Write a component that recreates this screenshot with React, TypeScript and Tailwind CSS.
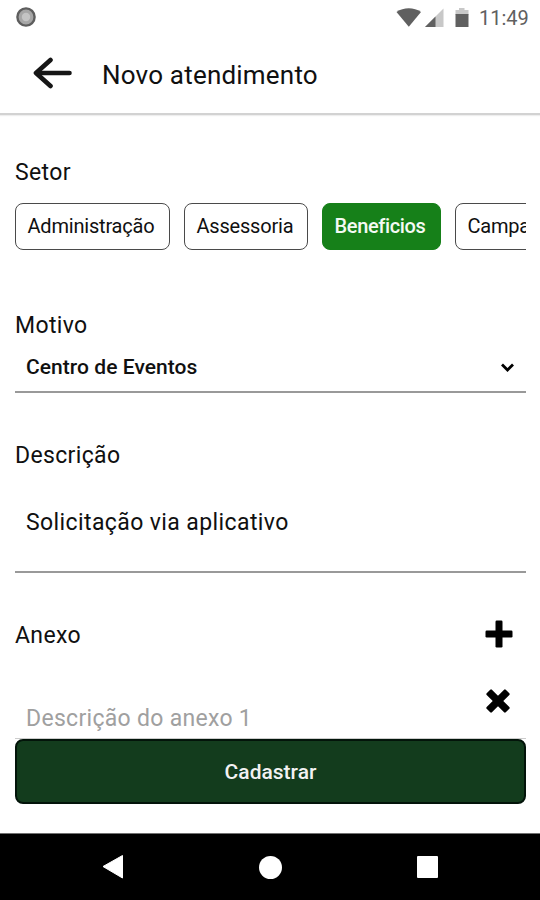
import React from 'react';

type Sector = {
  name: string;
  width: string;
  active?: boolean;
};

const sectors: Sector[] = [
  { name: 'Administração', width: 'w-[155px]' },
  { name: 'Assessoria', width: 'w-[124px]' },
  { name: 'Beneficios', width: 'w-[119px]', active: true },
  { name: 'Campanha', width: 'w-[124px]' },
];

// Android status bar
const StatusBar: React.FC = () => (
  <div className="flex h-9 shrink-0 items-center justify-between pl-4 pr-3">
    <svg width="20" height="20" viewBox="0 0 20 20" className="-mt-[2px]">
      <circle cx="10" cy="10" r="8.6" fill="#a6a6a6" stroke="#5e5e5e" strokeWidth="2.4" />
      <circle cx="10" cy="10" r="4.2" fill="#c4c4c4" />
    </svg>
    <div className="flex items-center">
      <svg width="76" height="20" viewBox="0 0 76 20">
        <path d="M0.5 4C7.5-1 18-1 25 4L12.8 18.8Z" fill="#606060" />
        <path d="M47.5 .5V19H29Z" fill="#c8c8c8" />
        <path d="M39.5 8.5V19H29Z" fill="#606060" />
        <path d="M63 0H68.5V2H72.5V7H59.5V2H63Z" fill="#c8c8c8" />
        <path d="M59.5 6H72.5V19H59.5Z" fill="#606060" />
      </svg>
      <span className="ml-[7px] w-[49px] text-[20px] leading-5 text-[#606060]">11:49</span>
    </div>
  </div>
);

const Header: React.FC = () => (
  <header className="flex h-[79px] shrink-0 items-center border-b-2 border-[#d2d2d2] pl-[33px] pb-[2px] shadow-[0_1px_1px_#eeeeee]">
    <svg width="40" height="32" viewBox="0 0 40 32" fill="none" stroke="#161616" className="-mt-px">
      <path d="M17.5 3L3 16L17.5 29" strokeWidth="4.6" strokeLinecap="round" strokeLinejoin="round" />
      <path d="M4 16H36.5" strokeWidth="4.6" strokeLinecap="round" />
    </svg>
    <h1 className="ml-[29px] mt-[2px] text-[26px] leading-8 tracking-[0.2px]">Novo atendimento</h1>
  </header>
);

const Label: React.FC<{ children: React.ReactNode }> = ({ children }) => (
  <h2 className="h-7 pt-px text-[23px] leading-7 tracking-[0.35px]">{children}</h2>
);

// Android navigation bar
const NavBar: React.FC = () => (
  <nav className="flex h-[67px] shrink-0 items-center justify-between border-t border-[#707070] bg-black pl-[101px] pr-[102px]">
    <svg width="22" height="26" viewBox="0 0 22 26" fill="#fff">
      <path d="M2 12.5L21.5 1.5V24Z" stroke="#fff" strokeLinejoin="round" />
    </svg>
    <div className="size-[23px] rounded-full bg-white" />
    <div className="h-[22px] w-[21px] rounded-[1px] bg-white" />
  </nav>
);

const App: React.FC = () => (
  <div className="flex h-[900px] w-[540px] flex-col overflow-hidden bg-white font-['Roboto',sans-serif] text-[#101010]">
    <StatusBar />
    <Header />

    <main className="flex min-h-0 flex-1 flex-col pl-[15px] pr-[14px] pt-[43px]">
      {/* Setor */}
      <Label>Setor</Label>
      <div className="mt-[17px] flex gap-[14px] overflow-hidden">
        {sectors.map((sector) => (
          <button
            key={sector.name}
            className={`h-[47px] shrink-0 rounded-lg border pb-[2px] pl-[11.5px] text-left text-[20px] leading-6 ${sector.width} ${
              sector.active
                ? 'border-[#168019] bg-[#168019] font-medium tracking-[-0.35px] text-[#f4faf4]'
                : 'border-[#4a4a4a] tracking-[-0.2px]'
            }`}
          >
            {sector.name}
          </button>
        ))}
      </div>

      {/* Motivo */}
      <div className="mt-[61px] border-b-2 border-[#999]">
        <Label>Motivo</Label>
        <div className="flex h-[52px] items-center justify-between pl-[11px] pr-3 pt-1">
          <span className="text-[21px] font-medium leading-7 tracking-[0.05px]">Centro de Eventos</span>
          <svg width="13" height="9" viewBox="0 0 13 9" fill="none" stroke="#000" strokeWidth="2.8">
            <path d="M1 1.5L6.5 7L12 1.5" />
          </svg>
        </div>
      </div>

      {/* Descrição */}
      <div className="mt-[48px] border-b-2 border-[#999]">
        <Label>Descrição</Label>
        <p className="h-[102px] pl-[11px] pt-[40px] text-[23px] font-[450] leading-7 tracking-[0.4px]">
          Solicitação via aplicativo
        </p>
      </div>

      {/* Anexo */}
      <div className="mt-[46px] flex h-[32px] items-center justify-between pr-[13px]">
        <Label>Anexo</Label>
        <svg width="28" height="28" viewBox="0 0 28 28" fill="#000" className="-mt-[2px]">
          <rect x="10.5" y=".5" width="7" height="27" rx="1.2" />
          <rect x=".5" y="10.5" width="27" height="7" rx="1.2" />
        </svg>
      </div>
      <div className="mt-[36px] flex h-[52px] justify-between border-b border-[#ccc] pl-[11px] pr-4">
        <span className="mt-[18px] text-[23px] font-[450] leading-7 tracking-[0.3px] text-[#a0a0a0]">
          Descrição do anexo 1
        </span>
        <svg width="24" height="24" viewBox="0 0 24 24" fill="#000" className="mt-[2px]">
          <rect x="8.3" y="-1.5" width="7.4" height="27" rx="1.2" transform="rotate(45 12 12)" />
          <rect x="8.3" y="-1.5" width="7.4" height="27" rx="1.2" transform="rotate(-45 12 12)" />
        </svg>
      </div>

      <button className="h-[65px] shrink-0 rounded-lg border-2 border-[#03140a] bg-[#133c1d] pt-[3px] text-[21px] font-medium text-[#f2f2f2]">
        Cadastrar
      </button>
    </main>

    <NavBar />
  </div>
);

export default App;
